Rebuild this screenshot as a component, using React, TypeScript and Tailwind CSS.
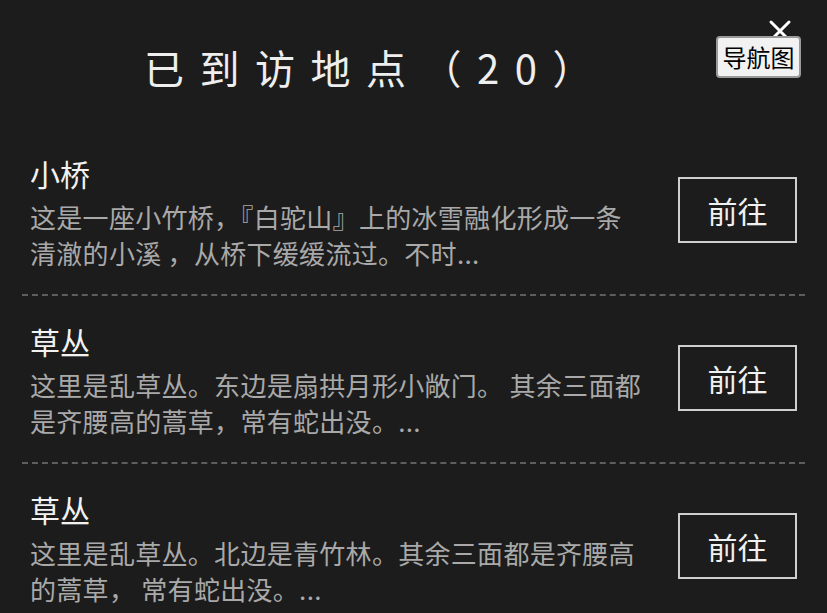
import React from 'react';

type Place = {
  id: number;
  name: string;
  desc: string;
};

const places: Place[] = [
  { id: 1, name: '小桥', desc: '这是一座小竹桥，『白驼山』上的冰雪融化形成一条清澈的小溪 ，从桥下缓缓流过。不时...' },
  { id: 2, name: '草丛', desc: '这里是乱草丛。东边是扇拱月形小敞门。 其余三面都是齐腰高的蒿草，常有蛇出没。...' },
  { id: 3, name: '草丛', desc: '这里是乱草丛。北边是青竹林。其余三面都是齐腰高的蒿草， 常有蛇出没。...' },
];

const font = { fontFamily: '"Noto Sans CJK SC", "Noto Sans", sans-serif' };

const App = () => {
  return (
    <div className="w-[827px] h-[613px] overflow-hidden bg-[#1c1c1c] relative" style={font}>
      {/* header */}
      <div className="h-[128px] pl-[144px] pt-[35px]">
        <h1 className="text-[40px] leading-[64px] tracking-[15.5px] text-[#eeeeee] font-normal">
          已到访地点（20）
        </h1>
      </div>

      <div className="absolute right-[26px] top-[36px] flex flex-col items-center">
        <span className="absolute -top-[18px] right-[8px] text-white">
          <svg width="26" height="26" viewBox="0 0 26 26" fill="none" stroke="currentColor" strokeWidth="3" strokeLinecap="round">
            <path d="M4 4 L22 22 M22 4 L4 22" />
          </svg>
        </span>
        <button className="relative w-[85px] h-[42px] bg-[#f2f2f2] border-2 border-[#9a9a9a] rounded-[4px] text-[24px] leading-none text-black">
          导航图
        </button>
      </div>

      {/* visited list */}
      <div className="px-[22px]">
        {places.map((p, i) => (
          <div
            key={p.id}
            className={`flex items-start h-[168px] pl-[8px] pr-[8px] ${
              i < places.length - 1 ? 'border-b-[2px] border-dashed border-[#5e5e5e]' : ''
            }`}
          >
            <div className="flex-1 pt-[25px]">
              <div className="text-[30px] leading-[40px] text-[#f2f2f2]">{p.name}</div>
              <p className="mt-[6px] w-[612px] text-[26px] leading-[36px] tracking-[0.3px] text-[#a9a9a9]">
                {p.desc}
              </p>
            </div>
            <button className="mt-[49px] -ml-[1px] w-[119px] h-[66px] border-2 border-[#cfcfcf] text-[30px] leading-none text-[#f0f0f0]">
              前往
            </button>
          </div>
        ))}
      </div>
    </div>
  );
};

export default App;
